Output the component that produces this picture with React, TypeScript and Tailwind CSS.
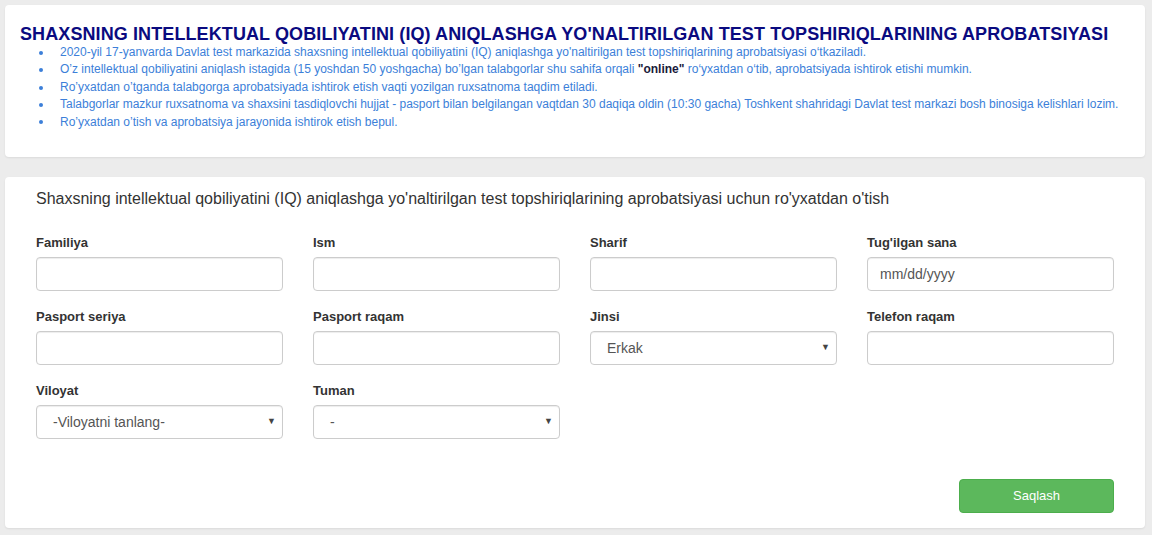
import React from "react";

const Field = ({ label, children }: { label: string; children: React.ReactNode }) => (
  <div className="flex flex-col">
    <label className="text-[13px] font-bold text-[#333] leading-[18px] mb-[5px]">{label}</label>
    {children}
  </div>
);

const Input = ({ placeholder }: { placeholder?: string }) => (
  <div className="h-[34px] w-full rounded-[4px] border border-[#ccc] bg-white shadow-[inset_0_1px_1px_rgba(0,0,0,0.075)] px-[12px] flex items-center text-[14px] text-[#555]">
    {placeholder}
  </div>
);

const Select = ({ value }: { value: string }) => (
  <div className="h-[34px] w-full rounded-[4px] border border-[#ccc] bg-white shadow-[inset_0_1px_1px_rgba(0,0,0,0.075)] pl-[16px] pr-[6px] flex items-center justify-between text-[14px] text-[#555]">
    <span>{value}</span>
    <span className="text-[9px] text-[#444]">▼</span>
  </div>
);

const bullets: React.ReactNode[] = [
  "2020-yil 17-yanvarda Davlat test markazida shaxsning intellektual qobiliyatini (IQ) aniqlashga yo'naltirilgan test topshiriqlarining aprobatsiyasi o‘tkaziladi.",
  <>
    O’z intellektual qobiliyatini aniqlash istagida (15 yoshdan 50 yoshgacha) bo’lgan talabgorlar shu sahifa orqali{" "}
    <b className="text-[#1a1a3a]">"online"</b> ro‘yxatdan o‘tib, aprobatsiyada ishtirok etishi mumkin.
  </>,
  "Ro’yxatdan o’tganda talabgorga aprobatsiyada ishtirok etish vaqti yozilgan ruxsatnoma taqdim etiladi.",
  "Talabgorlar mazkur ruxsatnoma va shaxsini tasdiqlovchi hujjat - pasport bilan belgilangan vaqtdan 30 daqiqa oldin (10:30 gacha) Toshkent shahridagi Davlat test markazi bosh binosiga kelishlari lozim.",
  "Ro’yxatdan o’tish va aprobatsiya jarayonida ishtirok etish bepul.",
];

export default function App() {
  return (
    <div
      className="w-[1152px] h-[535px] bg-[#ececec] pt-[5px] overflow-hidden"
      style={{ fontFamily: '"Liberation Sans", Arial, sans-serif' }}
    >
      <div className="ml-[5px] w-[1140px] h-[152px] bg-white rounded-[4px] shadow-[0_1px_2px_rgba(0,0,0,0.08)] pl-[15px] pt-[19px]">
        <h1 className="text-[18px] font-bold text-[#0a0a80] leading-[20px] tracking-[0.1px]">
          SHAXSNING INTELLEKTUAL QOBILIYATINI (IQ) ANIQLASHGA YO'NALTIRILGAN TEST TOPSHIRIQLARINING APROBATSIYASI
        </h1>
        <ul className="pl-[19px] text-[12px] leading-[17.4px] text-[#3c7fd9]">
          {bullets.map((b, i) => (
            <li key={i} className="flex items-center">
              <span className="w-[4px] h-[4px] rounded-full bg-[#3c7fd9] mr-[17px] shrink-0" />
              <span>{b}</span>
            </li>
          ))}
        </ul>
      </div>

      <div className="ml-[5px] mt-[20px] w-[1140px] h-[351px] bg-white rounded-[4px] shadow-[0_1px_2px_rgba(0,0,0,0.08)] px-[31px] pt-[12px]">
        <h2 className="text-[16px] text-[#333] leading-[20px]">
          Shaxsning intellektual qobiliyatini (IQ) aniqlashga yo'naltirilgan test topshiriqlarining aprobatsiyasi uchun ro'yxatdan o'tish
        </h2>
        <div className="mt-[25px] grid grid-cols-4 gap-x-[30px] gap-y-[17px] w-[1078px]">
          <Field label="Familiya"><Input /></Field>
          <Field label="Ism"><Input /></Field>
          <Field label="Sharif"><Input /></Field>
          <Field label="Tug'ilgan sana"><Input placeholder="mm/dd/yyyy" /></Field>
          <Field label="Pasport seriya"><Input /></Field>
          <Field label="Pasport raqam"><Input /></Field>
          <Field label="Jinsi"><Select value="Erkak" /></Field>
          <Field label="Telefon raqam"><Input /></Field>
          <Field label="Viloyat"><Select value="-Viloyatni tanlang-" /></Field>
          <Field label="Tuman"><Select value="-" /></Field>
        </div>
        <div className="flex justify-end mt-[40px] w-[1078px]">
          <button className="w-[155px] h-[34px] rounded-[4px] bg-[#5cb85c] border border-[#4cae4c] text-white text-[13px]">
            Saqlash
          </button>
        </div>
      </div>
    </div>
  );
}
